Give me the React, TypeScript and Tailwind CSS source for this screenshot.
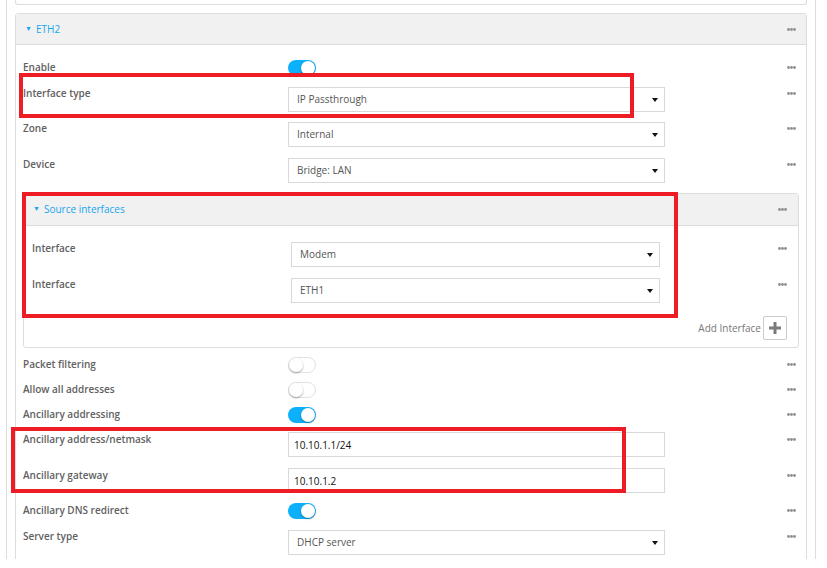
import type { ReactNode } from 'react'

const font = { fontFamily: '"Open Sans", "Liberation Sans", sans-serif' }

function Dots() {
  return (
    <svg width="9" height="3" viewBox="0 0 9 3" className="block">
      <circle cx="1.5" cy="1.5" r="1.4" fill="#8f8f8f" />
      <circle cx="4.5" cy="1.5" r="1.4" fill="#8f8f8f" />
      <circle cx="7.5" cy="1.5" r="1.4" fill="#8f8f8f" />
    </svg>
  )
}

function Caret() {
  return (
    <svg width="6" height="4" viewBox="0 0 6 4" className="block">
      <path d="M0 0h6L3 4z" fill="#111" />
    </svg>
  )
}

function Toggle({ on }: { on: boolean }) {
  return on ? (
    <div className="relative h-[16px] w-[28px] rounded-full bg-[#0db0fb]">
      <div className="absolute right-[1px] top-[1px] h-[14px] w-[14px] rounded-full bg-white shadow-[0_1px_2px_rgba(0,0,0,0.35)]" />
    </div>
  ) : (
    <div className="relative h-[16px] w-[28px] rounded-full border border-[#e2e2e2] bg-white">
      <div className="absolute left-0 top-0 h-[14px] w-[14px] rounded-full bg-white shadow-[0_1px_2px_rgba(0,0,0,0.35)]" />
    </div>
  )
}

function Select({ value, w = 'w-[377px]' }: { value: string; w?: string }) {
  return (
    <div
      className={`mt-[1px] flex h-[25px] ${w} items-center justify-between border border-[#d9d9d9] bg-white pl-[8px] pr-[6px] text-[10px] text-[#555]`}
    >
      <span>{value}</span>
      <Caret />
    </div>
  )
}

function Input({ value }: { value: string }) {
  return (
    <div className="flex h-[25px] w-[377px] items-end border border-[#d9d9d9] bg-white pb-[3px] pl-[5px] text-[10px] text-[#111]">
      {value}
    </div>
  )
}

function Row({
  label,
  h,
  children,
  labelW = 'w-[265px]',
  dotsMr = 'mr-[10px]',
}: {
  label: string
  h: string
  children: ReactNode
  labelW?: string
  dotsMr?: string
}) {
  return (
    <div className={`flex items-start ${h}`}>
      <div className={`${labelW} shrink-0 text-[10px] font-semibold leading-[14px] text-[#616161]`}>{label}</div>
      <div className="shrink-0">{children}</div>
      <div className="flex-1" />
      <div className={`flex h-[14px] items-center ${dotsMr}`}>
        <Dots />
      </div>
    </div>
  )
}

function SubHeader({ title }: { title: string }) {
  return (
    <div className="flex h-[32px] items-center border-b border-[#dcdcdc] bg-[#f1f1f1] pl-[9px] pr-[11px] text-[10px] text-[#17a6f0]">
      <span className="mr-[4px] text-[7px]">▼</span>
      <span>{title}</span>
      <div className="flex-1" />
      <Dots />
    </div>
  )
}

export default function App() {
  return (
    <div className="relative h-[568px] w-[827px] overflow-hidden bg-white" style={font}>
      <div className="ml-[6px] h-[559px] w-[810px] overflow-hidden border-x border-[#dddddd] px-[8px]">
        {/* previous card (end) */}
        <div className="h-[5px] rounded-b-[3px] border-x border-b border-[#dddddd]" />

        {/* ETH2 card */}
        <div className="mt-[8px] h-[600px] rounded-t-[3px] border border-[#dddddd]">
          <div className="flex h-[31px] items-center border-b border-[#dcdcdc] bg-[#f1f1f1] pl-[9px] pr-[10px] text-[10px] text-[#17a6f0]">
            <span className="mr-[4px] text-[7px]">▼</span>
            <span>ETH2</span>
            <div className="flex-1" />
            <Dots />
          </div>

          <div className="pl-[7px] pt-[15px]">
            <Row label="Enable" h="h-[26px]">
              <Toggle on />
            </Row>
            <Row label="Interface type" h="h-[35px]">
              <Select value="IP Passthrough" />
            </Row>
            <Row label="Zone" h="h-[36px]">
              <Select value="Internal" />
            </Row>
            <Row label="Device" h="h-[36px]">
              <Select value="Bridge: LAN" />
            </Row>

            {/* Source interfaces */}
            <div className="mr-[7px] rounded-[3px] border border-[#dddddd]">
              <SubHeader title="Source interfaces" />
              <div className="pl-[8px] pt-[15px]">
                <Row label="Interface" h="h-[36px]" labelW="w-[259px]" dotsMr="mr-[11px]">
                  <Select value="Modem" w="w-[369px]" />
                </Row>
                <Row label="Interface" h="h-[36px]" labelW="w-[259px]" dotsMr="mr-[11px]">
                  <Select value="ETH1" w="w-[369px]" />
                </Row>
                <div className="mt-[3px] flex items-center justify-end pb-[7px] pr-[11px]">
                  <span className="mr-[2px] text-[10px] text-[#777]">Add Interface</span>
                  <div className="flex h-[24px] w-[24px] items-center justify-center rounded-[2px] border border-[#cccccc] bg-white">
                    <svg width="12" height="12" viewBox="0 0 12 12">
                      <path d="M4.5 0h3v4.5H12v3H7.5V12h-3V7.5H0v-3h4.5z" fill="#7a7a7a" />
                    </svg>
                  </div>
                </div>
              </div>
            </div>

            <div className="pt-[9px]">
              <Row label="Packet filtering" h="h-[25px]">
                <Toggle on={false} />
              </Row>
              <Row label="Allow all addresses" h="h-[25px]">
                <Toggle on={false} />
              </Row>
              <Row label="Ancillary addressing" h="h-[25px]">
                <Toggle on />
              </Row>
              <Row label="Ancillary address/netmask" h="h-[36px]">
                <Input value="10.10.1.1/24" />
              </Row>
              <Row label="Ancillary gateway" h="h-[35px]">
                <Input value="10.10.1.2" />
              </Row>
              <Row label="Ancillary DNS redirect" h="h-[26px]">
                <Toggle on />
              </Row>
              <Row label="Server type" h="h-[36px]">
                <Select value="DHCP server" />
              </Row>
            </div>
          </div>
        </div>
      </div>

      {/* red annotation boxes */}
      <div className="pointer-events-none absolute left-[19px] top-[73px] h-[45px] w-[615px] border-4 border-[#ee1c25]" />
      <div className="pointer-events-none absolute left-[22px] top-[192px] h-[126px] w-[656px] border-4 border-[#ee1c25]" />
      <div className="pointer-events-none absolute left-[11px] top-[427px] h-[66px] w-[615px] border-4 border-[#ee1c25]" />
    </div>
  )
}
